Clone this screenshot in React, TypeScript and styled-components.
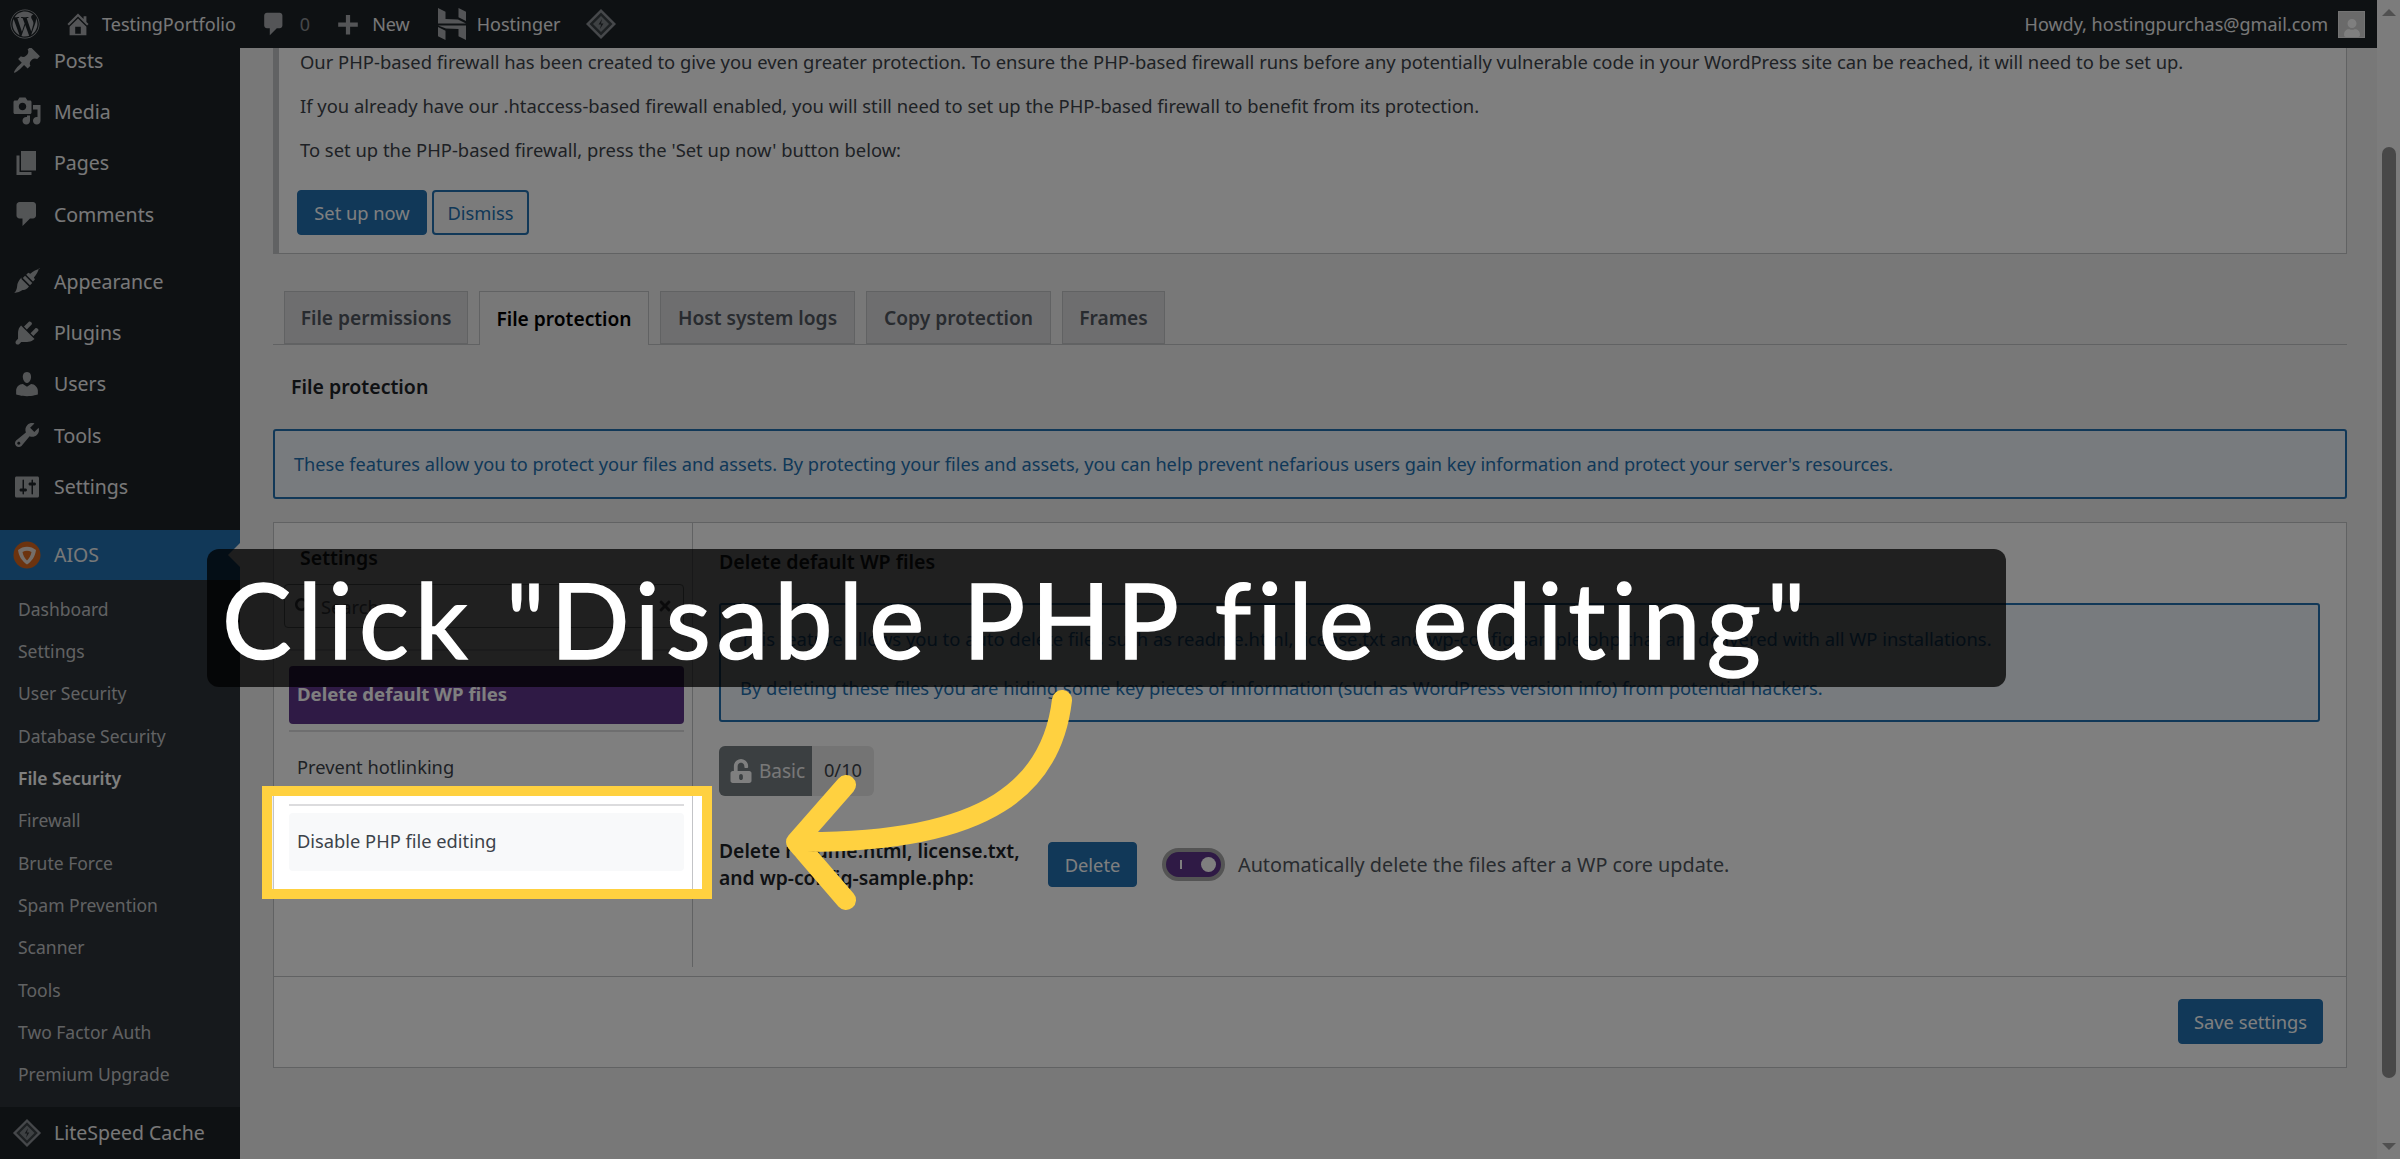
import React from "react";
import styled, { createGlobalStyle } from "styled-components";
import { FaWordpress, FaSearch, FaTimes, FaUnlockAlt, FaUser } from "react-icons/fa";

const ui = `"Noto Sans", "Open Sans", "Liberation Sans", sans-serif`;

// dashicons paths
const paths = {
  home: "M16 8.5l1.53 1.53-1.06 1.06L10 4.62l-6.47 6.47-1.06-1.06L10 2.5l4 4v-2h2v4zm-6-2.46l6 5.99V18H4v-5.97zM12 17v-5H8v5h4z",
  plus: "M17 9v3h-5.5v5.5h-3V12H3V9h5.500V3.500h3V9z",
  post: "M10.44 3.02l1.82-1.82 6.36 6.35-1.83 1.82c-1.05-.68-2.48-.57-3.41.36l-.75.75c-.92.93-1.04 2.35-.35 3.41l-1.83 1.82-2.41-2.41-2.8 2.79c-.42.42-3.38 2.71-3.8 2.29s1.86-3.39 2.28-3.81l2.79-2.79L4.1 9.36l1.83-1.82c1.05.69 2.48.57 3.4-.36l.75-.75c.93-.92 1.05-2.35.36-3.41z",
  media: "M13 11V4c0-.55-.45-1-1-1h-1.67L9 1H5L3.67 3H2c-.55 0-1 .45-1 1v7c0 .55.45 1 1 1h10c.55 0 1-.45 1-1zM7 4.500c1.380 0 2.500 1.120 2.500 2.500S8.380 9.500 7 9.500 4.500 8.380 4.500 7 5.620 4.500 7 4.500zM14 6h5v10.500c0 1.380-1.120 2.500-2.500 2.500S14 17.880 14 16.500s1.120-2.500 2.500-2.500c.17 0 .34.02.5.05V9h-3V6zm-4 8.050V13h2v3.500c0 1.380-1.120 2.500-2.500 2.500S7 17.880 7 16.500 8.120 14 9.500 14c.17 0 .34.02.5.05z",
  page: "M6 15V2h10v13H6zm-1 1h8v2H3V5h2v11z",
  comment: "M5 2h9c1.100 0 2 .9 2 2v7c0 1.100-.9 2-2 2h-2l-5 5v-5H5c-1.100 0-2-.9-2-2V4c0-1.100.9-2 2-2z",
  brush: "M18.500 1.800c-2 .3-4.500 1.700-6.300 3.400l-1.400-.7-1.300 1.300 4.500 4.500 1.300-1.300-.7-1.400c1.700-1.800 3.100-4.300 3.400-6.300zM8.700 6.500L13.500 11.300 12 12.800 7.200 8zM6.300 8.700l5 5c-1.200 1.600-2.700 2.600-4.300 2.300-1.300.9-3.600 1.800-5.500 2 1.100-1.200 1.800-2.700 1.900-4.400 0-2 1.300-4.300 2.900-5.900z",
  plugin: "M13.110 4.360L9.870 7.600 8 5.730l3.240-3.240c.35-.34 1.050-.2 1.560.32.52.51.66 1.210.31 1.550zm-8 1.770l.91-1.120 9.010 9.010-1.190.84c-.71.71-2.630 1.160-3.820 1.160H6.140L4.900 17.260c-.59.59-1.540.59-2.120 0-.59-.58-.59-1.530 0-2.120l1.240-1.240v-3.880c0-1.130.4-3.190 1.090-3.890zm7.260 3.970l3.240-3.240c.34-.35 1.040-.21 1.550.31.52.51.66 1.210.31 1.550l-3.240 3.250z",
  users: "M10 9.250c-2.270 0-2.730-3.440-2.730-3.440C7 4.020 7.820 2 9.970 2c2.160 0 2.980 2.020 2.710 3.810 0 0-.41 3.440-2.680 3.440zm0 2.570L12.720 10c2.390 0 4.520 2.330 4.520 4.530v2.490s-3.650 1.130-7.240 1.130c-3.650 0-7.240-1.130-7.240-1.130v-2.490c0-2.250 1.940-4.480 4.470-4.480z",
  tools: "M16.680 9.770c-1.340 1.340-3.300 1.670-4.950.99l-5.410 6.520c-.99.99-2.590.99-3.580 0s-.99-2.590 0-3.570l6.520-5.420c-.68-1.650-.35-3.610.99-4.950 1.280-1.280 3.120-1.620 4.720-1.060l-2.890 2.890 2.820 2.820 2.860-2.870c.53 1.580.18 3.390-1.080 4.650zM3.810 16.210c.4.39 1.040.39 1.430 0 .4-.4.4-1.040 0-1.430-.39-.4-1.030-.4-1.430 0-.39.39-.39 1.030 0 1.430z",
  settings: "M18 16V4c0-.55-.45-1-1-1H3c-.55 0-1 .45-1 1v12c0 .55.45 1 1 1h14c.55 0 1-.45 1-1zM8 11h1c.55 0 1 .45 1 1s-.45 1-1 1H8v1.500c0 .28-.22.5-.5.5s-.5-.22-.5-.5V13H6c-.55 0-1-.45-1-1s.45-1 1-1h1V5.500c0-.28.22-.5.5-.5s.5.22.5.5V11zm5-2h-1c-.55 0-1-.45-1-1s.45-1 1-1h1V5.500c0-.28.22-.5.5-.5s.5.22.5.5V7h1c.55 0 1 .45 1 1s-.45 1-1 1h-1v5.500c0 .28-.22.5-.5.5s-.5-.22-.5-.5V9z",
};

const Dash = ({ name, size = 30 }: { name: keyof typeof paths; size?: number }) => (
  <svg width={size} height={size} viewBox="0 0 20 20" fill="currentColor">
    <path d={paths[name]} />
  </svg>
);

const Diamond = ({ size = 32 }: { size?: number }) => (
  <svg width={size} height={size} viewBox="0 0 32 32" fill="none">
    <path d="M16 1L31 16 16 31 1 16z" fill="#8c9196" />
    <path d="M16 4.500L27.500 16 16 27.500 4.500 16z" fill="#3a4045" />
    <path d="M16 8L24 16 16 24 8 16z" fill="#7d8387" />
    <path d="M17 11l-3.500 5.500h2.500L15 21l3.500-5.500H16z" fill="#2b3035" />
  </svg>
);

const HostingerMark = () => (
  <svg width="28" height="32" viewBox="0 0 28 32" fill="#a8abae">
    <path d="M0 0l7.500 3.800V11L20 11.500 28 15.500H0z" />
    <path d="M20.500 0L28 3.800V13l-7.500-3.800z" />
    <path d="M0 17.500h28V32l-7.500-3.800V21L8 20.500z" />
    <path d="M0 19l7.500 3.800V32L0 28.200z" />
  </svg>
);

const AiosMark = () => (
  <svg width="28" height="28" viewBox="0 0 28 28">
    <circle cx="14" cy="14" r="13.500" fill="#d9661f" />
    <path d="M5 9c5-4.500 13-4.500 18 0-.8 6.500-4 11-9 14.500C9 20 5.800 15.500 5 9z" fill="#e8ddd4" />
    <path d="M9.500 11c3-1.800 6-1.800 9 0-.6 3.600-2.200 6.400-4.500 8.500-2.300-2.100-3.900-4.900-4.500-8.500z" fill="#d9661f" />
  </svg>
);

const topMenu: { icon: keyof typeof paths; label: string; $gap?: boolean }[] = [
  { icon: "post", label: "Posts" },
  { icon: "media", label: "Media" },
  { icon: "page", label: "Pages" },
  { icon: "comment", label: "Comments" },
  { icon: "brush", label: "Appearance", $gap: true },
  { icon: "plugin", label: "Plugins" },
  { icon: "users", label: "Users" },
  { icon: "tools", label: "Tools" },
  { icon: "settings", label: "Settings" },
];

const subMenu = [
  "Dashboard",
  "Settings",
  "User Security",
  "Database Security",
  "File Security",
  "Firewall",
  "Brute Force",
  "Spam Prevention",
  "Scanner",
  "Tools",
  "Two Factor Auth",
  "Premium Upgrade",
];

const tabs = [
  { label: "File permissions", w: 184 },
  { label: "File protection", w: 170, active: true },
  { label: "Host system logs", w: 195 },
  { label: "Copy protection", w: 185 },
  { label: "Frames", w: 103 },
];

export default function App() {
  return (
    <Page>
      <GlobalStyle />
      <Left>
        <AdminBar>
          <AdminGroup>
            <AdminIcon $ml={10}><FaWordpress size={30} /></AdminIcon>
            <AdminIcon $ml={24}><Dash name="home" size={28} /></AdminIcon>
            <AdminText $ml={10}>TestingPortfolio</AdminText>
            <AdminIcon $ml={24}><Dash name="comment" size={28} /></AdminIcon>
            <AdminText $ml={12} $dim>0</AdminText>
            <AdminIcon $ml={24}><Dash name="plus" size={28} /></AdminIcon>
            <AdminText $ml={10}>New</AdminText>
            <AdminIcon $ml={28}><HostingerMark /></AdminIcon>
            <AdminText $ml={11}>Hostinger</AdminText>
            <AdminIcon $ml={24}><Diamond /></AdminIcon>
          </AdminGroup>
          <AdminGroup>
            <AdminText>Howdy, hostingpurchas@gmail.com</AdminText>
            <Avatar><FaUser size={18} /></Avatar>
          </AdminGroup>
        </AdminBar>
        <Body>
          <Sidebar>
            <SideList>
              {topMenu.map((m) => (
                <SideItem key={m.label} $gap={m.$gap}>
                  <SideIcon><Dash name={m.icon} size={30} /></SideIcon>
                  {m.label}
                </SideItem>
              ))}
              <ActiveItem>
                <SideIcon><AiosMark /></SideIcon>
                AIOS
                <MenuNotch />
              </ActiveItem>
              <SubList>
                {subMenu.map((s) => (
                  <SubItem key={s} $current={s === "File Security"}>{s}</SubItem>
                ))}
              </SubList>
              <CacheItem>
                <SideIcon><Diamond size={30} /></SideIcon>
                LiteSpeed Cache
              </CacheItem>
            </SideList>
          </Sidebar>
          <Main>
            <Notice>
              <NoticeText>
                Our PHP-based firewall has been created to give you even greater protection. To ensure the PHP-based firewall runs before any potentially vulnerable code in your WordPress site can be reached, it will need to be set up.
              </NoticeText>
              <NoticeText>
                If you already have our .htaccess-based firewall enabled, you will still need to set up the PHP-based firewall to benefit from its protection.
              </NoticeText>
              <NoticeText>To set up the PHP-based firewall, press the 'Set up now' button below:</NoticeText>
              <NoticeActions>
                <PrimaryButton $w={130}>Set up now</PrimaryButton>
                <OutlineButton>Dismiss</OutlineButton>
              </NoticeActions>
            </Notice>

            <TabRow>
              {tabs.map((t) => (
                <Tab key={t.label} $w={t.w} $active={t.active}>{t.label}</Tab>
              ))}
            </TabRow>

            <SectionTitle>File protection</SectionTitle>
            <InfoBox>
              These features allow you to protect your files and assets. By protecting your files and assets, you can help prevent nefarious users gain key information and protect your server's resources.
            </InfoBox>

            <Panel>
              <PanelBody>
                <SettingsNav>
                  <NavTitle>Settings</NavTitle>
                  <SearchBox>
                    <FaSearch size={16} />
                    <SearchText>Search</SearchText>
                    <FaTimes size={16} />
                  </SearchBox>
                  <NavRule $top={21} $bottom={15} />
                  <NavItem $active>Delete default WP files</NavItem>
                  <NavRule $top={6} $bottom={7} />
                  <NavItem>Prevent hotlinking</NavItem>
                  <NavRule $top={7} $bottom={7} />
                  <NavItem $hover>Disable PHP file editing</NavItem>
                </SettingsNav>
                <SettingsContent>
                  <ContentTitle>Delete default WP files</ContentTitle>
                  <ContentInfo>
                    <p>This feature allows you to auto delete files such as readme.html, license.txt and wp-config-sample.php that are delivered with all WP installations.</p>
                    <p>By deleting these files you are hiding some key pieces of information (such as WordPress version info) from potential hackers.</p>
                  </ContentInfo>
                  <Badge>
                    <BadgeLabel><FaUnlockAlt size={24} />Basic</BadgeLabel>
                    <BadgeScore>0/10</BadgeScore>
                  </Badge>
                  <FormRow>
                    <FieldLabel>Delete readme.html, license.txt,<br />and wp-config-sample.php:</FieldLabel>
                    <PrimaryButton $w={89}>Delete</PrimaryButton>
                    <Toggle><ToggleTick /><ToggleKnob /></Toggle>
                    <ToggleText>Automatically delete the files after a WP core update.</ToggleText>
                  </FormRow>
                </SettingsContent>
              </PanelBody>
              <PanelFooter>
                <PrimaryButton $w={145}>Save settings</PrimaryButton>
              </PanelFooter>
            </Panel>
          </Main>
        </Body>
      </Left>
      <Scrollbar>
        <ArrowUp />
        <Thumb />
        <ArrowDown />
      </Scrollbar>

      <Highlight />
      <Arrow viewBox="760 680 320 240" width="320" height="240" fill="none">
        <path
          d="M1062 700C1052 785 990 842 806 842M846 785L796 842 846 900"
          stroke="#ffd140"
          strokeWidth="20"
          strokeLinecap="round"
          strokeLinejoin="round"
        />
      </Arrow>
      <Caption>Click "Disable PHP file editing"</Caption>
    </Page>
  );
}

const GlobalStyle = createGlobalStyle`
  html, body {
    margin: 0;
    padding: 0;
    overflow: hidden;
  }
  * {
    box-sizing: border-box;
  }
`;

const Page = styled.div`
  position: relative;
  display: flex;
  width: 2400px;
  height: 1159px;
  overflow: hidden;
  background: #f0f0f1;
  font-family: ${ui};
  font-size: 18.300px;
  color: #3c434a;
`;

const Left = styled.div`
  width: 2377px;
  display: flex;
  flex-direction: column;
`;

const AdminBar = styled.header`
  height: 48px;
  flex: none;
  display: flex;
  align-items: center;
  justify-content: space-between;
  background: #1d2327;
  color: #f0f0f1;
  font-size: 18px;
`;

const AdminGroup = styled.div`
  display: flex;
  align-items: center;
`;

const AdminIcon = styled.span<{ $ml?: number }>`
  display: flex;
  margin-left: ${(p) => p.$ml ?? 0}px;
  color: #a8abae;
`;

const AdminText = styled.span<{ $ml?: number; $dim?: boolean }>`
  margin-left: ${(p) => p.$ml ?? 0}px;
  color: ${(p) => (p.$dim ? "#8c8f94" : "#f0f0f1")};
`;

const Avatar = styled.span`
  width: 27px;
  height: 27px;
  margin: 0 12px 0 10px;
  display: flex;
  align-items: flex-end;
  justify-content: center;
  background: #d4d4d4;
  border: 1px solid #e6e6e6;
  color: #ffffff;
`;

const Body = styled.div`
  flex: 1;
  display: flex;
  min-height: 0;
`;

const Sidebar = styled.nav`
  width: 240px;
  flex: none;
  background: #1d2327;
  overflow: hidden;
`;

const SideList = styled.div`
  margin-top: -13.700px;
  color: #f0f0f1;
  font-size: 19.500px;
`;

const SideItem = styled.div<{ $gap?: boolean }>`
  height: 51.400px;
  display: flex;
  align-items: center;
  margin-top: ${(p) => (p.$gap ? "15.600px" : "0")};
`;

const SideIcon = styled.span`
  width: 54px;
  display: flex;
  justify-content: center;
  color: #a7aaad;
`;

const ActiveItem = styled.div`
  position: relative;
  height: 50px;
  margin-top: 17.300px;
  display: flex;
  align-items: center;
  background: #2271b1;
`;

const MenuNotch = styled.span`
  position: absolute;
  right: 0;
  top: 13px;
  border: 12px solid transparent;
  border-right-color: #f0f0f1;
`;

const SubList = styled.div`
  height: 527px;
  padding-top: 8px;
  background: #2c3338;
`;

const SubItem = styled.div<{ $current?: boolean }>`
  height: 42.300px;
  padding-left: 18px;
  display: flex;
  align-items: center;
  font-size: 17.500px;
  color: ${(p) => (p.$current ? "#fff" : "#c3c4c7")};
  font-weight: ${(p) => (p.$current ? 600 : 400)};
`;

const CacheItem = styled.div`
  height: 52px;
  display: flex;
  align-items: center;
`;

const Main = styled.main`
  flex: 1;
  min-width: 0;
  padding: 0 30px 0 33px;
  overflow: hidden;
`;

const Notice = styled.section`
  margin-top: -2px;
  height: 208px;
  padding: 0 0 0 21px;
  background: #fff;
  border: 1px solid #c3c4c7;
  border-left: 6px solid #c3c4c7;
`;

const NoticeText = styled.p`
  margin: 0 0 15px;
  line-height: 29px;
  white-space: nowrap;
  font-size: 18.400px;
`;

const NoticeActions = styled.div`
  display: flex;
  gap: 5px;
  margin: 26px 0 0 -3px;
`;

const PrimaryButton = styled.button<{ $w: number }>`
  width: ${(p) => p.$w}px;
  height: 45px;
  flex: none;
  padding: 0;
  border: 1px solid #2271b1;
  border-radius: 4px;
  background: #2271b1;
  color: #fff;
  font: inherit;
`;

const OutlineButton = styled.button`
  width: 97px;
  height: 45px;
  padding: 0;
  border: 2px solid #2271b1;
  border-radius: 4px;
  background: #f6f7f7;
  color: #2271b1;
  font: inherit;
`;

const TabRow = styled.nav`
  display: flex;
  gap: 11px;
  height: 54px;
  margin-top: 37px;
  padding-left: 11px;
  border-bottom: 1px solid #c3c4c7;
`;

const Tab = styled.div<{ $w: number; $active?: boolean }>`
  width: ${(p) => p.$w}px;
  height: ${(p) => (p.$active ? "54px" : "53px")};
  display: flex;
  align-items: center;
  justify-content: center;
  background: ${(p) => (p.$active ? "#f0f0f1" : "#dcdcde")};
  border: 1px solid #c3c4c7;
  border-bottom: ${(p) => (p.$active ? "none" : "1px solid #c3c4c7")};
  color: ${(p) => (p.$active ? "#000" : "#50575e")};
  font-size: 19.200px;
  font-weight: 600;
`;

const SectionTitle = styled.h2`
  margin: 28px 0 28px 18px;
  font-size: 19.500px;
  line-height: 28px;
  font-weight: 600;
  color: #1d2327;
`;

const InfoBox = styled.div`
  height: 70px;
  padding-left: 19px;
  display: flex;
  align-items: center;
  background: #f0f6fc;
  border: 2px solid #2271b1;
  border-radius: 3px;
  color: #2271b1;
  font-size: 18.200px;
`;

const Panel = styled.section`
  height: 546px;
  margin-top: 23px;
  display: flex;
  flex-direction: column;
  background: #fff;
  border: 1px solid #c3c4c7;
`;

const PanelBody = styled.div`
  height: 454px;
  display: flex;
  border-bottom: 1px solid #c3c4c7;
  padding-bottom: 9px;
`;

const SettingsNav = styled.aside`
  width: 419px;
  flex: none;
  display: flex;
  flex-direction: column;
  padding: 22px 8px 0 15px;
  border-right: 1px solid #c3c4c7;
`;

const NavTitle = styled.div`
  margin: 0 0 13px 11px;
  line-height: 26px;
  font-size: 19.500px;
  font-weight: 600;
  color: #1d2327;
`;

const SearchBox = styled.div`
  height: 44px;
  margin-left: -5px;
  padding: 0 10px;
  display: flex;
  align-items: center;
  gap: 10px;
  border: 1px solid #8c8f94;
  border-radius: 4px;
  color: #50575e;
`;

const SearchText = styled.span`
  flex: 1;
  color: #646970;
`;

const NavRule = styled.hr<{ $top: number; $bottom: number }>`
  width: 100%;
  height: 2px;
  flex: none;
  margin: ${(p) => p.$top}px 0 ${(p) => p.$bottom}px;
  border: none;
  background: #dcdcde;
`;

const NavItem = styled.div<{ $active?: boolean; $hover?: boolean }>`
  height: 58px;
  flex: none;
  padding: 0 0 3px 8px;
  display: flex;
  align-items: center;
  border-radius: 4px;
  font-size: ${(p) => (p.$active ? "18.600px" : "18.300px")};
  font-weight: ${(p) => (p.$active ? 700 : 400)};
  color: ${(p) => (p.$active ? "#fff" : "#3c434a")};
  background: ${(p) => (p.$active ? "#5e348a" : p.$hover ? "#f8f9fa" : "transparent")};
`;

const SettingsContent = styled.div`
  flex: 1;
  min-width: 0;
  padding: 25px 26px 0;
`;

const ContentTitle = styled.h3`
  margin: 0 0 27px;
  font-size: 19.600px;
  line-height: 28px;
  font-weight: 600;
  color: #1d2327;
`;

const ContentInfo = styled.div`
  height: 119px;
  padding: 20px 19px 0;
  background: #f0f6fc;
  border: 2px solid #2271b1;
  border-radius: 3px;
  color: #2271b1;
  font-size: 18.400px;

  p {
    margin: 0 0 21px;
    line-height: 28px;
    white-space: nowrap;
  }
`;

const Badge = styled.div`
  display: inline-flex;
  height: 50px;
  margin-top: 24px;
  border-radius: 6px;
  overflow: hidden;
  background: #e8e8e8;
`;

const BadgeLabel = styled.span`
  width: 93px;
  display: flex;
  align-items: center;
  justify-content: center;
  gap: 6px;
  padding-left: 3px;
  background: #767f83;
  color: #f0f0f1;
  font-size: 19px;

  svg {
    color: #ffffff;
  }
`;

const BadgeScore = styled.span`
  width: 62px;
  padding-bottom: 4px;
  display: flex;
  align-items: center;
  justify-content: center;
`;

const FormRow = styled.div`
  display: flex;
  align-items: center;
  margin-top: 41px;
`;

const FieldLabel = styled.label`
  width: 329px;
  flex: none;
  line-height: 27px;
  font-size: 19.300px;
  font-weight: 600;
  color: #1d2327;
`;

const Toggle = styled.span`
  position: relative;
  width: 63px;
  height: 33px;
  margin-left: 25px;
  flex: none;
  background: #5e348a;
  border: 4px solid #a8a8a8;
  border-radius: 17px;
`;

const ToggleTick = styled.span`
  position: absolute;
  left: 14px;
  top: 8px;
  width: 2px;
  height: 9px;
  background: #fff;
`;

const ToggleKnob = styled.span`
  position: absolute;
  right: 5px;
  top: 5px;
  width: 15px;
  height: 15px;
  border-radius: 50%;
  background: #fff;
`;

const ToggleText = styled.span`
  margin-left: 13px;
  color: #50575e;
  font-size: 19.800px;
`;

const PanelFooter = styled.div`
  flex: 1;
  display: flex;
  justify-content: flex-end;
  padding: 22px 23px 0 0;
`;

const Scrollbar = styled.aside`
  width: 23px;
  flex: none;
  display: flex;
  flex-direction: column;
  align-items: center;
  background: #f8f8f8;
`;

const ArrowUp = styled.span`
  margin-top: 9px;
  border: 7px solid transparent;
  border-top: none;
  border-bottom: 7px solid #a0a0a0;
`;

const Thumb = styled.span`
  width: 14px;
  height: 931px;
  margin-top: 131px;
  border-radius: 7px;
  background: #909090;
`;

const ArrowDown = styled.span`
  margin-top: auto;
  margin-bottom: 9px;
  border: 7px solid transparent;
  border-bottom: none;
  border-top: 7px solid #a0a0a0;
`;

const Highlight = styled.div`
  position: absolute;
  left: 262px;
  top: 786px;
  width: 450px;
  height: 113px;
  border: 10px solid #ffd140;
  box-shadow: 0 0 0 3000px rgba(0, 0, 0, 0.5);
`;

const Arrow = styled.svg`
  position: absolute;
  left: 760px;
  top: 680px;
`;

const Caption = styled.div`
  position: absolute;
  left: 207px;
  top: 549px;
  width: 1799px;
  height: 138px;
  padding-left: 15px;
  display: flex;
  align-items: center;
  border-radius: 12px;
  background: rgba(0, 0, 0, 0.75);
  color: #fff;
  font-family: Lato, ${ui};
  font-size: 104px;
  letter-spacing: 6px;
  -webkit-text-stroke: 1.500px #fff;
  white-space: nowrap;
`;
